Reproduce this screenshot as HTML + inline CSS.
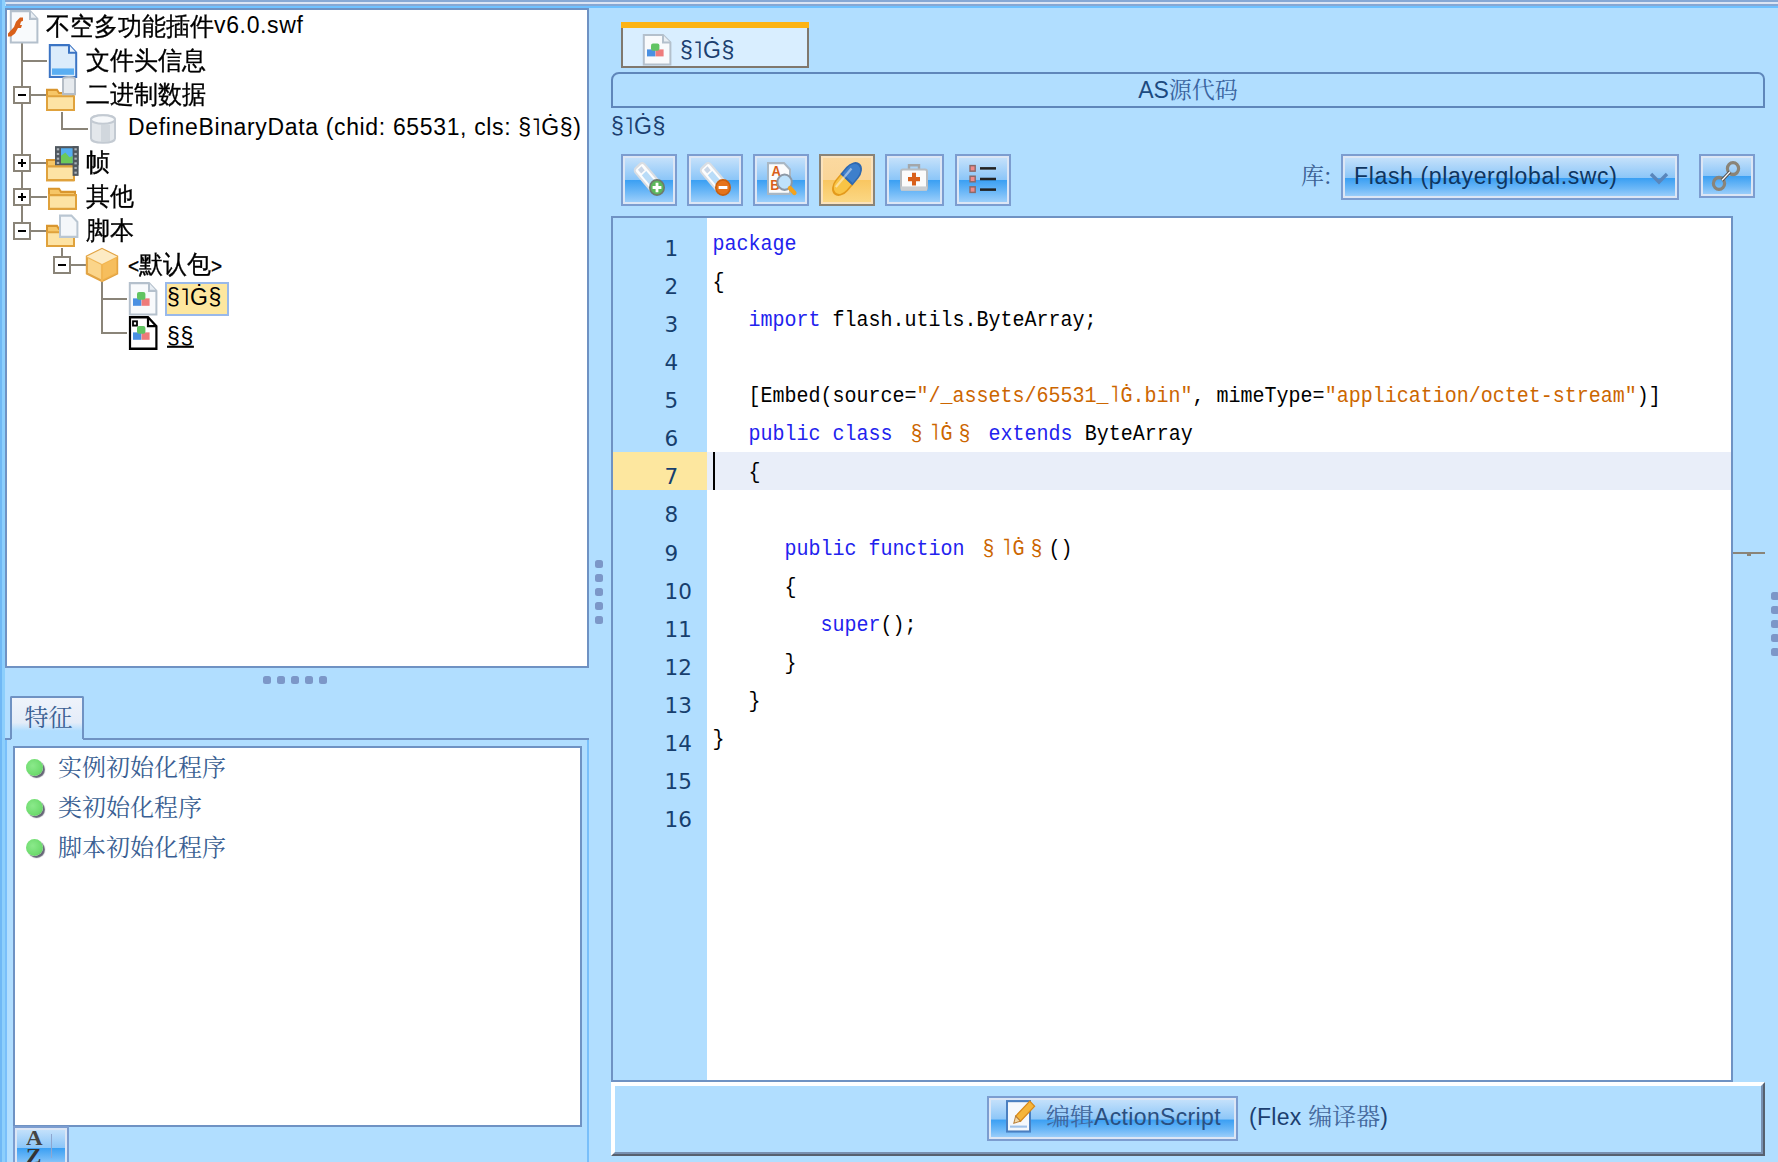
<!DOCTYPE html>
<html lang="zh-CN">
<head>
<meta charset="utf-8">
<title>JPEXS Free Flash Decompiler</title>
<style>
html,body{margin:0;padding:0;}
body{width:1778px;height:1162px;overflow:hidden;background:#b1deff;position:relative;
  font-family:"Liberation Sans","WenQuanYi Zen Hei","Noto Sans CJK SC",sans-serif;color:#000;}
.abs{position:absolute;}
svg{position:absolute;overflow:visible;}
#top1{left:0;top:0;width:1778px;height:2px;background:#86a8d5;}
#top2{left:6px;top:2px;width:1772px;height:2px;background:#dce5f4;}
#top3{left:6px;top:4px;width:1772px;height:2px;background:#86a8d5;}
#top4{left:4px;top:6px;width:1774px;height:2px;background:#6fc1ff;}
#left1{left:0;top:0;width:2px;height:1162px;background:#6fb8f5;}
#left2{left:2px;top:0;width:3px;height:1162px;background:#8ccffc;}
#tree{left:5px;top:8px;width:580px;height:656px;background:#fff;border:2px solid #6f92c3;}
.t{position:absolute;height:34px;line-height:34px;white-space:nowrap;font-size:24px;color:#000;transform:scaleY(1.058);transform-origin:0 50%;-webkit-text-stroke:0.3px #000;margin-top:0.3px;}
.l{font-size:23px;letter-spacing:0.65px;-webkit-text-stroke:0;}
.t .l{position:relative;top:-2.5px;}
.tl{position:absolute;background:#8a8478;}
.bx{position:absolute;width:18px;height:18px;border:2px solid #8a8478;background:#fff;box-sizing:border-box;}
.bx i{position:absolute;left:3px;top:6px;width:8px;height:2px;background:#000;}
.bx b{position:absolute;left:6px;top:3px;width:2px;height:8px;background:#000;}
#ftab{left:10px;top:696px;width:74px;height:43px;border:2px solid #6f92c3;border-bottom:none;box-sizing:border-box;border-radius:2px 2px 0 0;
  background:linear-gradient(#eef3fb 0,#e4ecf8 60%,#b1deff 80%);font-size:24px;color:#3a5f93;text-align:center;text-indent:3px;line-height:35px;font-family:"Noto Serif CJK SC","Liberation Serif",serif;}
#fline{left:83px;top:738px;width:506px;height:2px;background:#6f92c3;}
#fline2{left:5px;top:738px;width:6px;height:2px;background:#6f92c3;}
#flist{left:13px;top:746px;width:565px;height:377px;background:#fff;border:2px solid #6f92c3;}
.fi{position:absolute;left:43px;font-size:24px;color:#3a5f93;line-height:40px;height:40px;white-space:nowrap;font-family:"Noto Serif CJK SC","Liberation Serif",serif;}
.dot{position:absolute;left:11px;width:17px;height:17px;border-radius:50%;background:radial-gradient(circle at 40% 40%,#8be98b 0,#6fdc6f 60%,#5bb85b 100%);box-shadow:2px 2px 1px #667;}
#rtab{left:621px;top:28px;width:188px;height:40px;box-sizing:border-box;background:#d9eeff;border:2px solid #80786e;border-top:none;}
#rtabbar{left:621px;top:22px;width:188px;height:6px;background:#fcb314;}
#hdr{left:611px;top:72px;width:1154px;height:36px;box-sizing:border-box;border:2px solid #5f86ba;border-radius:8px 7px 0 0;text-align:center;font-size:23px;line-height:32px;color:#3a64a0;font-family:"Liberation Sans","Noto Serif CJK SC",serif;}
.tb{position:absolute;top:154px;height:52px;box-sizing:border-box;border:2px solid #7c9dd0;
  background:linear-gradient(#c9e3fb 0,#8cc6f8 49%,#3a9ff3 50%,#6db8f7 75%,#a5d3fb 100%);box-shadow:inset 0 0 0 2px #dce6f5;}
.tb.sel{border-color:#8a8478;background:linear-gradient(#fbd9a0 0,#fad598 49%,#f9c660 50%,#fbd988 100%);box-shadow:inset 0 0 0 2px #fbe3bd;}
#editor{left:611px;top:216px;width:1122px;height:866px;box-sizing:border-box;border:2px solid #6f92c3;background:#fff;}
#gutter{left:0;top:0;width:94px;height:862px;background:#b1deff;}
.ln{position:absolute;left:51.5px;font-size:21.5px;line-height:38px;height:38px;color:#173f6e;font-family:"DejaVu Sans","Liberation Sans",sans-serif;}
.cl{position:absolute;left:99.5px;font-family:"Liberation Mono",monospace;font-size:20px;line-height:38px;height:38px;white-space:pre;color:#000;transform:scaleY(1.07);transform-origin:0 66%;}
.k{color:#2222ee;} .s{color:#cc6600;} .w{display:inline-block;width:24px;text-align:center;}
#bbar{left:611px;top:1082px;width:1154px;height:74px;box-sizing:border-box;border:2px solid;border-color:#fff #56606e #56606e #fff;}
#bbar div{position:absolute;left:0;top:0;right:0;bottom:0;border:2px solid;border-color:#fff #7890b0 #7890b0 #fff;}

#rtabtxt{left:680px;top:32px;font-size:23px;letter-spacing:.65px;line-height:36px;color:#1c3f70;}
#lbl{left:611px;top:108px;font-size:23px;letter-spacing:.65px;line-height:36px;color:#1c3f70;}
#ku{left:1301px;top:157px;font-size:23px;line-height:36px;color:#3a5f93;font-family:"Noto Serif CJK SC","Liberation Serif",serif;}
#combo{left:1341px;top:154px;width:338px;height:46px;box-sizing:border-box;border:2px solid #7c9dd0;
  background:linear-gradient(#c9e3fb 0,#8cc6f8 52%,#3a9ff3 53%,#6db8f7 78%,#a5d3fb 100%);box-shadow:inset 0 0 0 2px #dce6f5;
  font-size:23px;letter-spacing:.65px;line-height:40px;color:#0f355f;padding-left:11px;white-space:nowrap;}
#linkb{left:1699px;top:154px;width:56px;height:44px;}
#linkb.tb{top:154px;height:44px;}
#ebtn{left:987px;top:1096px;width:251px;height:45px;box-sizing:border-box;border:2px solid #7c9dd0;
  background:linear-gradient(#c9e3fb 0,#8cc6f8 52%,#3a9ff3 53%,#6db8f7 78%,#a5d3fb 100%);box-shadow:inset 0 0 0 2px #dce6f5;}
#ebtxt{left:1046px;top:1098px;font-size:24px;line-height:38px;color:#3f659b;white-space:nowrap;font-family:"Liberation Sans","Noto Serif CJK SC",serif;}
#ebtxt .l{letter-spacing:.35px;color:#2a4f80;}
#flex{left:1249px;top:1098px;font-size:24px;line-height:38px;color:#44689c;white-space:nowrap;font-family:"Liberation Sans","Noto Serif CJK SC",serif;}
#flex .l{letter-spacing:.3px;color:#1c3f70;}
.sd{position:absolute;width:8px;height:8px;background:#7c97c8;border-radius:2.5px;}
#azb{left:13px;top:1126px;width:56px;height:44px;}
</style>
</head>
<body>
<div class="abs" id="top1"></div><div class="abs" id="top2"></div><div class="abs" id="top3"></div><div class="abs" id="top4"></div>
<div class="abs" id="left1"></div><div class="abs" id="left2"></div>
<div class="abs" id="tree">
<div class="tl" style="left:14px;top:32px;width:2px;height:189px"></div>
<div class="tl" style="left:15px;top:50px;width:25px;height:2px"></div>
<div class="tl" style="left:15px;top:84px;width:25px;height:2px"></div>
<div class="tl" style="left:15px;top:152px;width:25px;height:2px"></div>
<div class="tl" style="left:15px;top:186px;width:25px;height:2px"></div>
<div class="tl" style="left:15px;top:220px;width:25px;height:2px"></div>
<div class="bx" style="left:6px;top:76px"><i></i></div>
<div class="bx" style="left:6px;top:144px"><i></i><b></b></div>
<div class="bx" style="left:6px;top:178px"><i></i><b></b></div>
<div class="bx" style="left:6px;top:212px"><i></i></div>
<div class="tl" style="left:54px;top:102px;width:2px;height:18px"></div>
<div class="tl" style="left:55px;top:118px;width:26px;height:2px"></div>
<div class="tl" style="left:54px;top:238px;width:2px;height:17px"></div>
<div class="tl" style="left:55px;top:254px;width:24px;height:2px"></div>
<div class="bx" style="left:46px;top:246px"><i></i></div>
<div class="tl" style="left:94px;top:272px;width:2px;height:52px"></div>
<div class="tl" style="left:95px;top:288px;width:25px;height:2px"></div>
<div class="tl" style="left:95px;top:322px;width:25px;height:2px"></div>
<svg style="left:1px;top:0px" width="32" height="34" viewBox="0 0 16 16" preserveAspectRatio="none"><path d="M1.4 0.5h9.6l3.7 3.7v11.1h-13.3z" fill="#f8fafc" stroke="#b4c0cc" stroke-width="1"/><path d="M11 0.5v3.7h3.7" fill="#e8eef4" stroke="#b4c0cc" stroke-width="1"/><path d="M0 11 L3 8 L4 5.5 L6 3.5 L7.5 3.5 L7.5 5 L6.5 5.5 L6 7 L7 7 L6.5 8.5 L5 8.5 L3.5 11 L1.5 12.5 L0 12.5z" fill="#d9601a"/></svg>
<div class="t" style="left:39px;top:0px;">不空多功能插件<span class="l">v6.0.swf</span></div>
<svg style="left:40px;top:34px" width="32" height="34" viewBox="0 0 16 16" preserveAspectRatio="none"><path d="M1.4 0.5h9.6l3.6 3.6v11.4h-13.2z" fill="#dcecfb" stroke="#3b74c4" stroke-width="1"/><path d="M11 0.5v3.6h3.6" fill="#eaf3fd" stroke="#3b74c4"/><rect x="2.5" y="11.5" width="11" height="3" fill="#5aaef2"/></svg>
<div class="t" style="left:79px;top:34px;">文件头信息</div>
<svg style="left:39px;top:66px" width="32" height="34" viewBox="0 0 16 16" preserveAspectRatio="none"><g transform="translate(0,1)"><path d="M0.5 5.5h5l1 1.5h7v8h-13z" fill="#f6c667" stroke="#d9962f"/><path d="M0.5 8.5h13.5v6.5h-13.5z" fill="#fde3a4" stroke="#e0a23c"/></g><path d="M8.5 1.5c0-1.3 6-1.3 6 0v7h-6z" fill="#e6eaee" stroke="#b5bdc6"/></svg>
<div class="t" style="left:79px;top:68px;">二进制数据</div>
<svg style="left:79px;top:102px" width="32" height="34" viewBox="0 0 16 16" preserveAspectRatio="none"><path d="M2.5 3.5c0-2.6 12-2.6 12 0v9c0 2.6-12 2.6-12 0z" fill="#e3e7eb" stroke="#c3cad2"/><ellipse cx="8.5" cy="3.5" rx="6" ry="2" fill="#f6f8fa" stroke="#c3cad2"/><rect x="7.5" y="6" width="4.5" height="8" fill="#c9d0d7" opacity=".7"/></svg>
<div class="t" style="left:121px;top:102px;"><span class="l">DefineBinaryData (chid: 65531, cls: §˥Ġ§)</span></div>
<svg style="left:39px;top:134px" width="32" height="34" viewBox="0 0 16 16" preserveAspectRatio="none"><g transform="translate(0,2)"><path d="M0.5 5.5h5l1 1.5h7v8h-13z" fill="#f6c667" stroke="#d9962f"/><path d="M0.5 8.5h13.5v6.5h-13.5z" fill="#fde3a4" stroke="#e0a23c"/></g><rect x="4.5" y="1" width="11.8" height="9" fill="#4f575e"/><rect x="13.3" y="1" width="3" height="14" fill="#4f575e"/><rect x="7.5" y="2" width="5.8" height="7" fill="#55aef0"/><path d="M7.5 9v-3.5l2.2-1.5 2 2.2 1.6-.6v3.4z" fill="#6cc95a"/><rect x="5.4" y="2" width="1.2" height="1" fill="#aab2ba"/><rect x="5.4" y="4.2" width="1.2" height="1" fill="#aab2ba"/><rect x="5.4" y="6.4" width="1.2" height="1" fill="#aab2ba"/><rect x="5.4" y="8.4" width="1.2" height="1" fill="#aab2ba"/><rect x="14.2" y="2" width="1.2" height="1" fill="#aab2ba"/><rect x="14.2" y="4.2" width="1.2" height="1" fill="#aab2ba"/><rect x="14.2" y="6.4" width="1.2" height="1" fill="#aab2ba"/><rect x="14.2" y="8.6" width="1.2" height="1" fill="#aab2ba"/><rect x="14.2" y="10.8" width="1.2" height="1" fill="#aab2ba"/><rect x="14.2" y="13" width="1.2" height="1" fill="#aab2ba"/></svg>
<div class="t" style="left:79px;top:136px;">帧</div>
<svg style="left:39px;top:167px" width="32" height="34" viewBox="0 0 16 16" preserveAspectRatio="none"><g transform="translate(1,0)"><path d="M0.5 5.5h5l1 1.5h7v8h-13z" fill="#f6c667" stroke="#d9962f"/><path d="M0.5 8.5h13.5v6.5h-13.5z" fill="#fde3a4" stroke="#e0a23c"/></g></svg>
<div class="t" style="left:79px;top:170px;">其他</div>
<svg style="left:39px;top:202px" width="32" height="34" viewBox="0 0 16 16" preserveAspectRatio="none"><g transform="translate(0,1)"><path d="M0.5 5.5h5l1 1.5h7v8h-13z" fill="#f6c667" stroke="#d9962f"/><path d="M0.5 8.5h13.5v6.5h-13.5z" fill="#fde3a4" stroke="#e0a23c"/></g><path d="M7 1.7h5.7l3 3v7h-8.7z" fill="#f4f7fa" stroke="#b9c6d2"/></svg>
<div class="t" style="left:79px;top:204px;">脚本</div>
<svg style="left:79px;top:238px" width="32" height="34" viewBox="0 0 16 16" preserveAspectRatio="none"><g transform="translate(8 0) scale(1.08 1) translate(-8 0)"><path d="M8 0.5l7 3.5v8l-7 3.5l-7-3.5v-8z" fill="#fbd58a" stroke="#e2a444"/><path d="M1 4l7 3.5l7-3.5" fill="none" stroke="#f0b656"/><path d="M8 7.5v8" stroke="#f0b656"/><path d="M8 7.5l7-3.5v8l-7 3.5z" fill="#f4b64e" opacity=".75"/><path d="M1 4l7-3.5 7 3.5-7 3.5z" fill="#fdebc4"/></g></svg>
<div class="t" style="left:121px;top:238px;"><span style="font-size:19px">&lt;</span>默认包<span style="font-size:19px">&gt;</span></div>
<svg style="left:120px;top:272px" width="32" height="34" viewBox="0 0 16 16" preserveAspectRatio="none"><path d="M1.4 0.5h9.6l3.7 3.7v11.1h-13.3z" fill="#f8fafc" stroke="#b4c0cc" stroke-width="1"/><path d="M11 0.5v3.7h3.7" fill="#e8eef4" stroke="#b4c0cc" stroke-width="1"/><rect x="3" y="7.7" width="4.2" height="3.5" fill="#4a90e2"/><rect x="7.3" y="7.7" width="4" height="3.5" fill="#ee7b7b"/><rect x="5" y="4.7" width="4.2" height="3.7" rx="1" fill="#62c462"/></svg>
<div class="abs" style="left:158px;top:272px;width:64px;height:34px;box-sizing:border-box;background:#fde79f;border:2px solid #99b9ea"></div>
<div class="t" style="left:160px;top:272px;"><span class="l">§˥Ġ§</span></div>
<svg style="left:120px;top:306px" width="32" height="34" viewBox="0 0 16 16" preserveAspectRatio="none"><path d="M1.5 0.6h9l4.2 4.2v10.6h-13.2z" fill="#fff" stroke="#000" stroke-width="1.1"/><path d="M10.5 0.6v4.2h4.2" fill="none" stroke="#000" stroke-width="1.1"/><rect x="3" y="2.5" width="2" height="2" fill="#fff" stroke="#000" stroke-width=".9"/><rect x="3" y="7.7" width="4.2" height="3.5" fill="#4a90e2"/><rect x="7.3" y="7.7" width="4" height="3.5" fill="#ee7b7b"/><rect x="5" y="4.7" width="4.2" height="3.7" rx="1" fill="#62c462"/></svg>
<div class="t" style="left:160px;top:306px;"><span class="l" style="text-decoration:underline;top:1.5px">§§</span></div>
</div>
<div class="abs" id="ftab">特征</div>
<div class="abs" id="fline"></div><div class="abs" id="fline2"></div>
<div class="abs" id="flist">
<div class="dot" style="top:11px"></div><div class="fi" style="top:-2px">实例初始化程序</div>
<div class="dot" style="top:51px"></div><div class="fi" style="top:38px">类初始化程序</div>
<div class="dot" style="top:91px"></div><div class="fi" style="top:78px">脚本初始化程序</div>
</div>
<div class="abs" id="rtabbar"></div>
<div class="abs" id="rtab"><svg style="left:18px;top:6px" width="32" height="32" viewBox="0 0 16 16" preserveAspectRatio="none"><path d="M1.4 0.5h9.6l3.7 3.7v11.1h-13.3z" fill="#f8fafc" stroke="#b4c0cc" stroke-width="1"/><path d="M11 0.5v3.7h3.7" fill="#e8eef4" stroke="#b4c0cc" stroke-width="1"/><rect x="3" y="7.7" width="4.2" height="3.5" fill="#4a90e2"/><rect x="7.3" y="7.7" width="4" height="3.5" fill="#ee7b7b"/><rect x="5" y="4.7" width="4.2" height="3.7" rx="1" fill="#62c462"/></svg></div>
<div class="abs" id="rtabtxt">§˥Ġ§</div>
<div class="abs" id="lbl">§˥Ġ§</div>
<div class="tb" style="left:621px;width:56px"><svg style="left:10px;top:6px" width="32" height="34" viewBox="0 0 16 16" preserveAspectRatio="none"><g transform="translate(-2,0)"><g transform="translate(0.5,0) rotate(-42 5 3)"><rect x="2" y="1.5" width="6" height="14" rx="1.5" fill="#fdfdfd" stroke="#d9dde2" stroke-width="1"/><rect x="3.5" y="6" width="3" height="8" fill="#b9dcf8"/><rect x="3.8" y="2.8" width="2.4" height="2.4" fill="#c9d6e6"/></g></g><circle cx="12" cy="12" r="3.6" fill="#5cb85c" stroke="#6d7a6d" stroke-width=".8"/><path d="M12 9.8v4.4M9.8 12h4.4" stroke="#fff" stroke-width="1.4"/></svg></div>
<div class="tb" style="left:687px;width:56px"><svg style="left:10px;top:6px" width="32" height="34" viewBox="0 0 16 16" preserveAspectRatio="none"><g transform="translate(-2,0)"><g transform="translate(0.5,0) rotate(-42 5 3)"><rect x="2" y="1.5" width="6" height="14" rx="1.5" fill="#fdfdfd" stroke="#d9dde2" stroke-width="1"/><rect x="3.5" y="6" width="3" height="8" fill="#b9dcf8"/><rect x="3.8" y="2.8" width="2.4" height="2.4" fill="#c9d6e6"/></g></g><circle cx="12" cy="12" r="3.6" fill="#e5731a" stroke="#c9600f" stroke-width=".8"/><path d="M9.8 12h4.4" stroke="#fff" stroke-width="1.4"/></svg></div>
<div class="tb" style="left:753px;width:56px"><svg style="left:10px;top:6px" width="32" height="34" viewBox="0 0 16 16" preserveAspectRatio="none"><path d="M1.5 0.5h8l3 3v11.5h-11z" fill="#fbfcfd" stroke="#a9b7c4"/><text x="3.2" y="6.6" font-family="Liberation Sans,sans-serif" font-weight="bold" font-size="6.5" fill="#d9601a">A</text><text x="2.6" y="13" font-family="Liberation Sans,sans-serif" font-weight="bold" font-size="6.5" fill="#d9601a">B</text><circle cx="9.8" cy="9.5" r="3.6" fill="#bfe2fb" stroke="#8d99a6" stroke-width="1"/><path d="M12.5 12.3l2.2 2.2" stroke="#f2a320" stroke-width="2.2" stroke-linecap="round"/></svg></div>
<div class="tb sel" style="left:819px;width:56px"><svg style="left:10px;top:6px" width="32" height="34" viewBox="0 0 16 16" preserveAspectRatio="none"><g transform="rotate(-48 8 8) translate(8 8) scale(1.3 0.92) translate(-8 -8)"><path d="M1 8a4 4 0 0 1 4-4h3v8H5a4 4 0 0 1-4-4z" fill="#f9c445" stroke="#e39a1c" stroke-width=".8"/><path d="M8 4h3a4 4 0 0 1 0 8H8z" fill="#3d7fcc" stroke="#2e68b0" stroke-width=".8"/><path d="M3 6.2h9" stroke="#fff" stroke-opacity=".45" stroke-width="1.2"/></g></svg></div>
<div class="tb" style="left:885px;width:59px"><svg style="left:11px;top:6px" width="32" height="34" viewBox="0 0 16 16" preserveAspectRatio="none"><path d="M5.5 3.5v-2h5v2" fill="none" stroke="#a3a7ab" stroke-width="1.2"/><rect x="1.5" y="3.5" width="13" height="9.5" rx="1" fill="#fbfbfb" stroke="#b8bcc0"/><rect x="1.5" y="11.5" width="13" height="2" fill="#c9cdd1"/><path d="M8 5v6M5 8h6" stroke="#d9601a" stroke-width="2"/></svg></div>
<div class="tb" style="left:955px;width:56px"><svg style="left:10px;top:6px" width="32" height="34" viewBox="0 0 16 16" preserveAspectRatio="none"><rect x="1.5" y="1.7" width="2.6" height="2.6" fill="#f08a8a" stroke="#8a6a6a" stroke-width=".7"/><path d="M6.5 3.0h8" stroke="#222" stroke-width="1.2"/><rect x="1.5" y="6.7" width="2.6" height="2.6" fill="#f08a8a" stroke="#8a6a6a" stroke-width=".7"/><path d="M6.5 8.0h8" stroke="#222" stroke-width="1.2"/><rect x="1.5" y="11.7" width="2.6" height="2.6" fill="#f08a8a" stroke="#8a6a6a" stroke-width=".7"/><path d="M6.5 13.0h8" stroke="#222" stroke-width="1.2"/></svg></div>
<div class="abs" id="ku">库:</div>
<div class="abs" id="combo">Flash (playerglobal.swc)<svg style="left:306px;top:16px" width="20" height="14" viewBox="0 0 20 14"><path d="M2 2l8 8 8-8" fill="none" stroke="#5a86bb" stroke-width="3.4"/></svg></div>
<div class="tb" id="linkb"><svg style="left:9px;top:3px" width="32" height="34" viewBox="0 0 16 16" preserveAspectRatio="none"><g fill="none" stroke="#8a8478" stroke-width="1.6"><ellipse cx="4.5" cy="11.5" rx="2.8" ry="2.8"/><ellipse cx="11.5" cy="4.5" rx="2.8" ry="2.8"/></g><path d="M6 10L10 6" stroke="#555" stroke-width="1.6"/><path d="M6 10L10 6" stroke="#fff" stroke-width=".6"/></svg></div>
<div class="abs" id="hdr"><span class="l" style="color:#1c4a80;letter-spacing:0">AS</span>源代码</div>
<div class="abs" id="editor"><div class="abs" id="gutter"></div>
<div class="ln" style="top:12px">1</div>
<div class="cl" style="top:8px"><span class="k">package</span></div>
<div class="ln" style="top:50px">2</div>
<div class="cl" style="top:46px">{</div>
<div class="ln" style="top:88px">3</div>
<div class="cl" style="top:84px">   <span class="k">import</span> flash.utils.ByteArray;</div>
<div class="ln" style="top:126px">4</div>
<div class="cl" style="top:122px"></div>
<div class="ln" style="top:164px">5</div>
<div class="cl" style="top:160px">   [Embed(source=<span class="s">"/_assets/65531_˥Ġ.bin"</span>, mimeType=<span class="s">"application/octet-stream"</span>)]</div>
<div class="ln" style="top:202px">6</div>
<div class="cl" style="top:198px">   <span class="k">public</span> <span class="k">class</span> <span class="s"><span class="w">§</span>˥Ġ<span class="w">§</span></span> <span class="k">extends</span> ByteArray</div>
<div class="abs" style="left:0;top:234px;width:94px;height:38px;background:#fde79f"></div>
<div class="abs" style="left:94px;top:234px;width:1024px;height:38px;background:#e9eef9"></div>
<div class="abs" style="left:100px;top:234px;width:2px;height:38px;background:#000"></div>
<div class="ln" style="top:240px">7</div>
<div class="cl" style="top:236px">   {</div>
<div class="ln" style="top:278px">8</div>
<div class="cl" style="top:274px"></div>
<div class="ln" style="top:317px">9</div>
<div class="cl" style="top:313px">      <span class="k">public</span> <span class="k">function</span> <span class="s"><span class="w">§</span>˥Ġ<span class="w">§</span></span>()</div>
<div class="ln" style="top:355px">10</div>
<div class="cl" style="top:351px">      {</div>
<div class="ln" style="top:393px">11</div>
<div class="cl" style="top:389px">         <span class="k">super</span>();</div>
<div class="ln" style="top:431px">12</div>
<div class="cl" style="top:427px">      }</div>
<div class="ln" style="top:469px">13</div>
<div class="cl" style="top:465px">   }</div>
<div class="ln" style="top:507px">14</div>
<div class="cl" style="top:503px">}</div>
<div class="ln" style="top:545px">15</div>
<div class="cl" style="top:541px"></div>
<div class="ln" style="top:583px">16</div>
<div class="cl" style="top:579px"></div>
</div>
<div class="abs" id="bbar"><div></div></div>
<div class="abs" id="ebtn"><svg style="left:15px;top:1px" width="32" height="34" viewBox="0 0 16 16" preserveAspectRatio="none"><rect x="1.5" y="1" width="11.5" height="14.3" fill="#f4f8fc" stroke="#4a7fc0"/><path d="M3 13h8.5" stroke="#9fc2ea"/><g transform="rotate(45 9 7)"><rect x="7.5" y="0" width="3.4" height="10" fill="#f5b53a" stroke="#d98a1a" stroke-width=".6"/><path d="M7.5 10l1.7 3 1.7-3z" fill="#f3d9a8" stroke="#b9803a" stroke-width=".5"/></g></svg></div>
<div class="abs" id="ebtxt">编辑<span class="l">ActionScript</span></div>
<div class="abs" id="flex"><span class="l">(Flex</span> 编译器<span class="l">)</span></div>
<div class="sd" style="left:263px;top:676px"></div>
<div class="sd" style="left:595px;top:560px"></div>
<div class="sd" style="left:1771px;top:592px"></div>
<div class="sd" style="left:277px;top:676px"></div>
<div class="sd" style="left:595px;top:574px"></div>
<div class="sd" style="left:1771px;top:606px"></div>
<div class="sd" style="left:291px;top:676px"></div>
<div class="sd" style="left:595px;top:588px"></div>
<div class="sd" style="left:1771px;top:620px"></div>
<div class="sd" style="left:305px;top:676px"></div>
<div class="sd" style="left:595px;top:602px"></div>
<div class="sd" style="left:1771px;top:634px"></div>
<div class="sd" style="left:319px;top:676px"></div>
<div class="sd" style="left:595px;top:616px"></div>
<div class="sd" style="left:1771px;top:648px"></div>
<div class="abs" style="left:1733px;top:552px;width:32px;height:2px;background:#8a8478"></div><div class="abs" style="left:1747px;top:554px;width:4px;height:2px;background:#8a8478"></div>
<div class="abs" style="left:587px;top:740px;width:2px;height:422px;background:#79bffa"></div>
<div class="abs" style="left:5px;top:740px;width:2px;height:422px;background:#79bffa"></div>
<div class="tb" id="azb" style="top:1126px;height:44px;width:56px"><div class="abs" style="left:11px;top:0px;font:bold 20px/20px 'Liberation Serif',serif;color:#444;transform:scaleX(1.15);transform-origin:0 0">A</div><div class="abs" style="left:11px;top:18px;font:bold 20px/20px 'Liberation Serif',serif;color:#333;transform:scaleX(1.15);transform-origin:0 0">Z</div><div class="abs" style="left:36px;top:6px;width:1px;height:24px;background:#8fa6cf"></div></div>
</body>
</html>
